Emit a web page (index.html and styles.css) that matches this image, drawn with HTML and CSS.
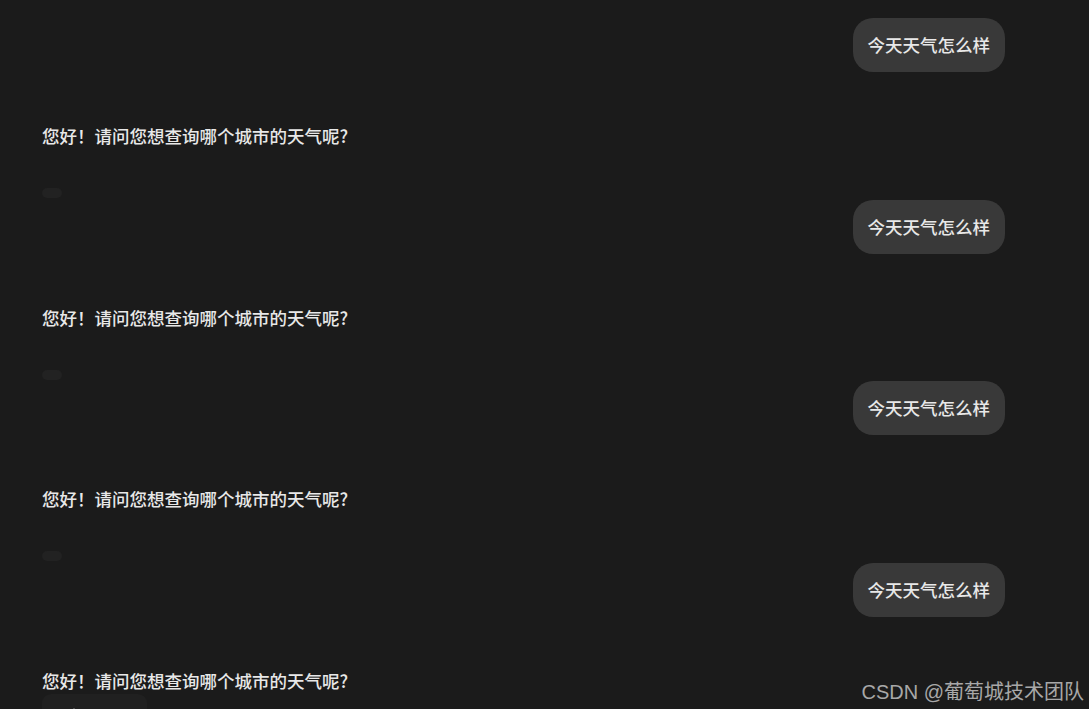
FILE: index.html
```html
<!DOCTYPE html>
<html lang="zh-CN">
  <head>
    <meta charset="UTF-8" />
    <meta name="viewport" content="width=device-width, initial-scale=1.0" />
    <title>天气助手</title>
    <link rel="stylesheet" href="styles.css">
  </head>
  <body>
    <main class="chat">
      <div class="msg-user">今天天气怎么样</div>
      <div class="msg-bot">
        <p class="msg-text">您好！请问您想查询哪个城市的天气呢?</p>
        <div class="msg-tools"></div>
      </div>

      <div class="msg-user">今天天气怎么样</div>
      <div class="msg-bot">
        <p class="msg-text">您好！请问您想查询哪个城市的天气呢?</p>
        <div class="msg-tools"></div>
      </div>

      <div class="msg-user">今天天气怎么样</div>
      <div class="msg-bot">
        <p class="msg-text">您好！请问您想查询哪个城市的天气呢?</p>
        <div class="msg-tools"></div>
      </div>

      <div class="msg-user">今天天气怎么样</div>
      <div class="msg-bot">
        <p class="msg-text">您好！请问您想查询哪个城市的天气呢?</p>
        <div class="msg-tools msg-tools-open">
          <span class="tool-dot"></span>
        </div>
      </div>
    </main>
    <div class="watermark">CSDN @葡萄城技术团队</div>
  </body>
</html>
```
FILE: styles.css
```css
body {
  margin: 0;
  padding: 0;
  background-color: #1b1b1b;
  color: #e8e8e8;
  font-family: "Noto Sans CJK SC", "Noto Sans", sans-serif;
  font-size: 17.5px;
  font-weight: 500;
  overflow: hidden;
  height: 709px;
}
.chat {
  display: flex;
  flex-direction: column;
  padding: 18px 84px 0 42px;
}
.msg-user {
  align-self: flex-end;
  background: #393939;
  border-radius: 20px;
  padding: 14px 15px;
  line-height: 26px;
  margin-bottom: 51px;
}
.msg-bot {
  display: flex;
  flex-direction: column;
  align-items: flex-start;
}
.msg-text {
  margin: 0;
  line-height: 26px;
}
.msg-tools {
  margin-top: 39px;
  margin-bottom: 1.6px;
  width: 20px;
  height: 10px;
  border-radius: 5px;
  background: #222222;
}
.msg-tools-open {
  margin-top: 0;
  width: 105px;
  height: 44px;
  border-radius: 9px;
  background: #202020;
  position: relative;
}
.tool-dot {
  position: absolute;
  left: 31px;
  top: 14px;
  width: 2px;
  height: 3px;
  background: #4a4a4a;
}
.watermark {
  position: absolute;
  right: 5px;
  bottom: 4px;
  font-size: 20px;
  font-weight: 400;
  color: #a8a8a8;
  font-family: "Liberation Sans", "Noto Sans CJK SC", sans-serif;
}
```
